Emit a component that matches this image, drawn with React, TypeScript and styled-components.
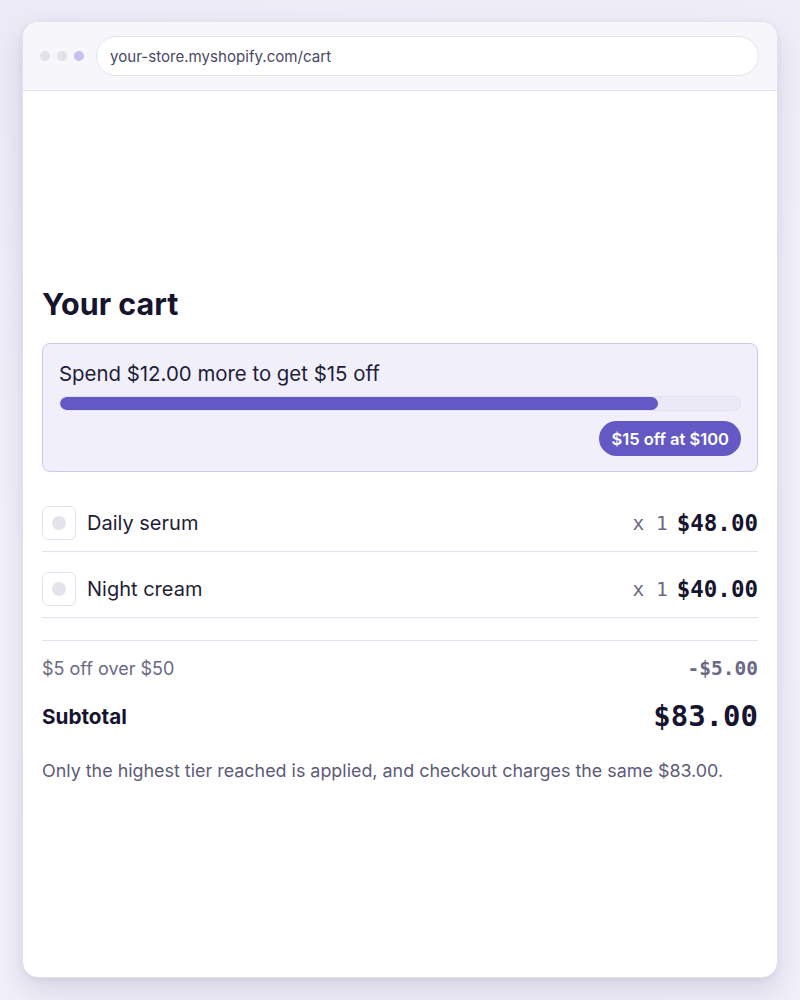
import React from 'react'
import styled, { createGlobalStyle } from 'styled-components'

const GlobalStyle = createGlobalStyle`
    html, body {
        margin: 0;
        padding: 0;
    }
    body {
        background: linear-gradient(160deg, #ebeaf6 0%, #f3f2f9 45%, #f1f0f8 100%);
        font-family: Inter, "Noto Sans", sans-serif;
        color: #1a1833;
    }
`

type CartItem = {
    name: string
    qty: number
    price: number
}

const items: CartItem[] = [
    { name: 'Daily serum', qty: 1, price: 48 },
    { name: 'Night cream', qty: 1, price: 40 },
]

const money = (n: number) => `$${n.toFixed(2)}`

export default function App() {
    const total = items.reduce((s, i) => s + i.qty * i.price, 0)
    const goal = 100
    const progress = Math.min(total / goal, 1) * 100

    return (
        <>
            <GlobalStyle />
            <Page>
                <Window>
                    <Toolbar>
                        <Dots>
                            <Dot />
                            <Dot />
                            <Dot $active />
                        </Dots>
                        <Address>your-store.myshopify.com/cart</Address>
                    </Toolbar>
                    <Content>
                        <Heading>Your cart</Heading>
                        <TierBox>
                            <TierText>Spend {money(goal - total)} more to get $15 off</TierText>
                            <Track>
                                <Fill style={{ width: `${progress}%` }} />
                            </Track>
                            <BadgeRow>
                                <Badge>$15 off at $100</Badge>
                            </BadgeRow>
                        </TierBox>
                        <ItemList>
                            {items.map((item) => (
                                <ItemRow key={item.name}>
                                    <Thumb>
                                        <ThumbDot />
                                    </Thumb>
                                    <ItemName>{item.name}</ItemName>
                                    <Qty>x {item.qty}</Qty>
                                    <Price>{money(item.price)}</Price>
                                </ItemRow>
                            ))}
                        </ItemList>
                        <Summary>
                            <DiscountRow>
                                <span>$5 off over $50</span>
                                <DiscountValue>-$5.00</DiscountValue>
                            </DiscountRow>
                            <SubtotalRow>
                                <SubtotalLabel>Subtotal</SubtotalLabel>
                                <SubtotalValue>{money(total - 5)}</SubtotalValue>
                            </SubtotalRow>
                            <Note>Only the highest tier reached is applied, and checkout charges the same {money(total - 5)}.</Note>
                        </Summary>
                    </Content>
                </Window>
            </Page>
        </>
    )
}

const Page = styled.div`
    padding: 21px 22px 22px 22px;
`
const Window = styled.div`
    height: 957px;
    box-sizing: border-box;
    background: #ffffff;
    border: 1px solid #e2e0ee;
    border-radius: 16px;
    overflow: hidden;
    box-shadow: 0 14px 30px rgba(60, 50, 120, 0.14), 0 2px 6px rgba(60, 50, 120, 0.07);
`
const Toolbar = styled.div`
    display: flex;
    align-items: center;
    gap: 12px;
    padding: 14px 18px 14px 17px;
    background: #f7f6fb;
    border-bottom: 1px solid #e6e4f0;
`
const Dots = styled.div`
    display: flex;
    gap: 7px;
`
const Dot = styled.span<{ $active?: boolean }>`
    width: 10px;
    height: 10px;
    border-radius: 50%;
    background: ${(p) => (p.$active ? '#c5c0f0' : '#e2e1eb')};
`
const Address = styled.div`
    flex: 1;
    height: 40px;
    box-sizing: border-box;
    display: flex;
    align-items: center;
    padding: 0 13px;
    background: #ffffff;
    border: 1px solid #e2e0ee;
    border-radius: 20px;
    font-size: 15.1px;
    color: #4a4866;
`
const Content = styled.div`
    padding: 195px 19px 0 19px;
`
const Heading = styled.h1`
    margin: 0 0 21px 0;
    font-size: 30.5px;
    line-height: 36px;
    font-weight: 700;
    color: #16142e;
`
const TierBox = styled.div`
    background: #f1effa;
    border: 1px solid #cdc8f0;
    border-radius: 8px;
    padding: 16px 16px 15px 16px;
`
const TierText = styled.div`
    font-size: 20.4px;
    line-height: 28px;
    color: #1f1d38;
`
const Track = styled.div`
    margin-top: 8px;
    height: 15px;
    box-sizing: border-box;
    background: #ebe9f5;
    border: 1px solid #e2e0ef;
    border-radius: 8px;
    overflow: hidden;
`
const Fill = styled.div`
    height: 100%;
    background: #6459c4;
    border-radius: 8px;
`
const BadgeRow = styled.div`
    display: flex;
    justify-content: flex-end;
    margin-top: 10px;
`
const Badge = styled.span`
    display: inline-flex;
    align-items: center;
    height: 35px;
    padding: 0 12px;
    background: #6459c4;
    color: #ffffff;
    border-radius: 18px;
    font-size: 16.5px;
    font-weight: 600;
`
const ItemList = styled.div`
    margin-top: 14px;
`
const ItemRow = styled.div`
    display: flex;
    align-items: center;
    gap: 11px;
    padding: 20px 0 11px 0;
    border-bottom: 1px solid #e4e2ef;
`
const Thumb = styled.div`
    width: 34px;
    height: 34px;
    box-sizing: border-box;
    border: 1px solid #e4e2ef;
    border-radius: 6px;
    display: flex;
    align-items: center;
    justify-content: center;
`
const ThumbDot = styled.span`
    width: 14px;
    height: 14px;
    border-radius: 50%;
    background: #e4e3ee;
`
const ItemName = styled.span`
    flex: 1;
    font-size: 20px;
    color: #1f1d38;
`
const Qty = styled.span`
    font-family: "DejaVu Sans Mono", "Liberation Mono", monospace;
    font-size: 19.5px;
    color: #6b6985;
`
const Price = styled.span`
    margin-left: -2px;
    font-family: "DejaVu Sans Mono", "Liberation Mono", monospace;
    font-size: 22.5px;
    font-weight: 700;
    color: #16142e;
`
const Summary = styled.div`
    margin-top: 22px;
    border-top: 1px solid #e4e2ef;
    padding-top: 15px;
`
const DiscountRow = styled.div`
    display: flex;
    justify-content: space-between;
    align-items: center;
    font-size: 18px;
    line-height: 26px;
    color: #6b6985;
`
const DiscountValue = styled.span`
    font-family: "DejaVu Sans Mono", "Liberation Mono", monospace;
    font-size: 19.5px;
    font-weight: 700;
    color: #6b6985;
`
const SubtotalRow = styled.div`
    display: flex;
    justify-content: space-between;
    align-items: center;
    margin-top: 16px;
`
const SubtotalLabel = styled.span`
    font-size: 20.7px;
    font-weight: 700;
    color: #16142e;
`
const SubtotalValue = styled.span`
    font-family: "DejaVu Sans Mono", "Liberation Mono", monospace;
    font-size: 29px;
    line-height: 36px;
    font-weight: 700;
    color: #16142e;
`
const Note = styled.p`
    margin: 24px 0 0 0;
    font-size: 17.9px;
    line-height: 26px;
    color: #5d5b78;
`
